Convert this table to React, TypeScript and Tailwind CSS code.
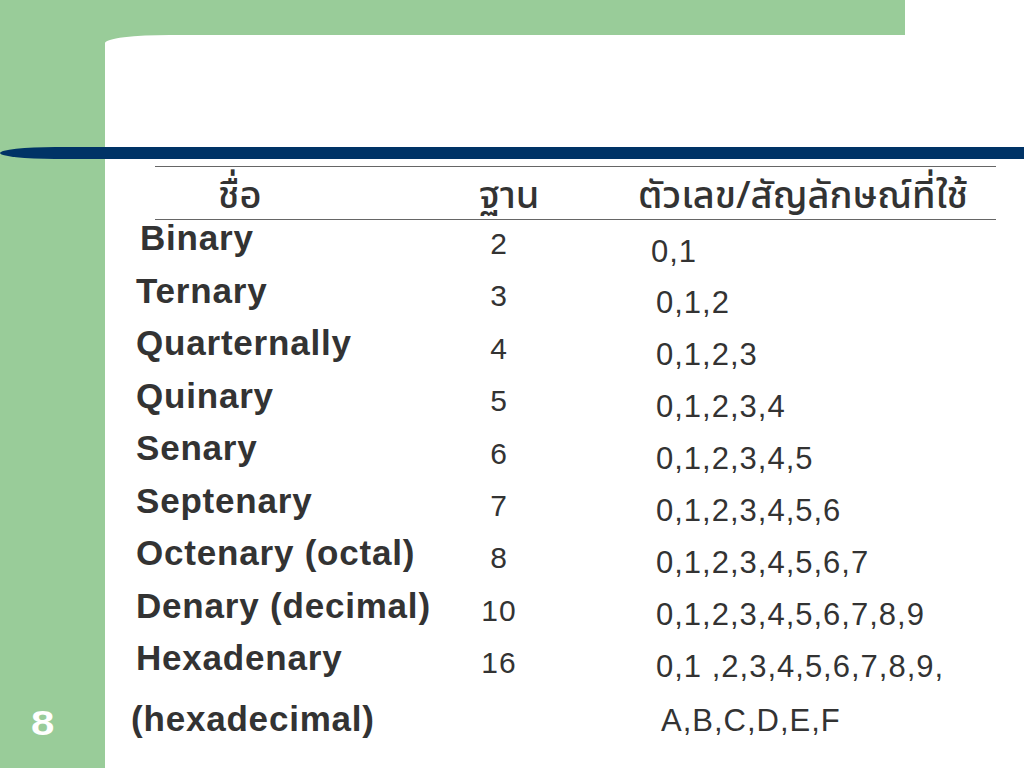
import React from "react";

const names = [
  { t: "Binary", cls: "ml-[4px]" },
  { t: "Ternary", cls: "" },
  { t: "Quarternally", cls: "" },
  { t: "Quinary", cls: "" },
  { t: "Senary", cls: "" },
  { t: "Septenary", cls: "" },
  { t: "Octenary (octal)", cls: "" },
  { t: "Denary (decimal)", cls: "" },
  { t: "Hexadenary", cls: "" },
];

const bases = ["2", "3", "4", "5", "6", "7", "8", "10", "16"];

const values = [
  { t: "0,1", cls: "ml-[-5px]" },
  { t: "0,1,2", cls: "" },
  { t: "0,1,2,3", cls: "" },
  { t: "0,1,2,3,4", cls: "" },
  { t: "0,1,2,3,4,5", cls: "" },
  { t: "0,1,2,3,4,5,6", cls: "" },
  { t: "0,1,2,3,4,5,6,7", cls: "" },
  { t: "0,1,2,3,4,5,6,7,8,9", cls: "" },
  { t: "0,1 ,2,3,4,5,6,7,8,9,", cls: "" },
];

export default function App() {
  return (
    <div className="w-[1024px] h-[768px] bg-[#99cc99] flex flex-col overflow-hidden font-['Liberation_Sans',Arial,sans-serif] text-[#333333]">
      <div className="h-[35px] flex">
        <div className="w-[905px]" />
        <div className="flex-1 bg-white" />
      </div>
      <div className="h-[112px] flex">
        <div className="w-[105px]" />
        <div className="flex-1 bg-white rounded-tl-[65px_8px]" />
      </div>
      <div className="h-[12px] bg-[#003366] rounded-l-[55px_6px]" />
      <div className="flex-1 flex">
        <div className="w-[105px] flex flex-col justify-end pb-[28px] pl-[31px]">
          <span className="text-white font-bold text-[35px] leading-none scale-x-[1.2] origin-left">8</span>
        </div>
        <div className="flex-1 bg-white flex flex-col">
          {/* header */}
          <div className="ml-[50px] w-[841px] mt-[7px] border-t border-b border-[#666666] h-[54px] flex font-['Noto_Sans_Thai','Noto_Sans','Liberation_Sans',sans-serif] font-medium text-[38px] leading-none">
            <div className="w-[297px] pl-[63px] pt-[11px]">ชื่อ</div>
            <div className="w-[88px] pl-[27px] pt-[11px]">ฐาน</div>
            <div className="flex-1 pl-[98px] pt-[11px]">ตัวเลข/สัญลักษณ์ที่ใช้</div>
          </div>
          {/* body */}
          <div className="flex">
            <div className="w-[324px] ml-[31px] pt-[0px] flex flex-col gap-[17.5px] font-bold text-[35px] leading-[35px] tracking-[0.8px]">
              {names.map((n) => (
                <div key={n.t} className={n.cls}>
                  {n.t}
                </div>
              ))}
              <div className="ml-[-5px] mt-[8.5px]">(hexadecimal)</div>
            </div>
            <div className="w-[78px] pt-[9px] flex flex-col gap-[22.4px] text-[30px] leading-[30px] tracking-[1px] text-center">
              {bases.map((b) => (
                <div key={b}>{b}</div>
              ))}
            </div>
            <div className="flex-1 pl-[118px] pt-[15.5px] flex flex-col gap-[20.9px] text-[31px] leading-[31px] tracking-[1px]">
              {values.map((v) => (
                <div key={v.t} className={v.cls}>
                  {v.t}
                </div>
              ))}
              <div className="ml-[5px] mt-[2px]">A,B,C,D,E,F</div>
            </div>
          </div>
        </div>
      </div>
    </div>
  );
}
